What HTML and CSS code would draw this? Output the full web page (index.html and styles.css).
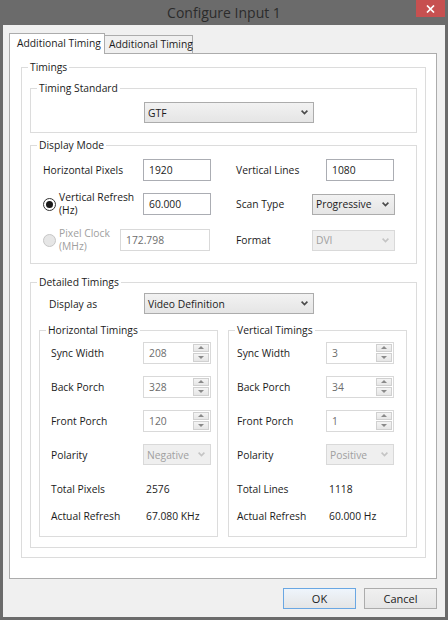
FILE: index.html
```html
<!DOCTYPE html>
<html lang="en">
<head>
    <meta charset="UTF-8">
    <title>Configure Input 1</title>
    <link rel="stylesheet" href="styles.css">
</head>
<body>
    <div class="window">
        <div class="titlebar">
            <span class="title">Configure Input 1</span>
            <button class="close-btn" aria-label="Close">
                <svg width="9" height="8" viewBox="0 0 9 8"><path d="M1 0.5 L8 7.5 M8 0.5 L1 7.5" stroke="#fff" stroke-width="1.7"/></svg>
            </button>
        </div>

        <div class="client">
            <div class="tabs">
                <div class="tab active">Additional Timing</div>
                <div class="tab">Additional Timing</div>
            </div>

            <div class="tab-panel">
                <fieldset class="group timings">
                    <legend>Timings</legend>

                    <fieldset class="group standard">
                        <legend>Timing Standard</legend>
                        <div class="combo std-combo">
                            <span>GTF</span>
                            <svg class="chev" width="7" height="5" viewBox="0 0 7 5"><path d="M0.6 0.6 L3.5 3.6 L6.4 0.6" fill="none" stroke="#4a4a4a" stroke-width="1.6"/></svg>
                        </div>
                    </fieldset>

                    <fieldset class="group display-mode">
                        <legend>Display Mode</legend>
                        <div class="dm-row">
                            <div class="dm-cell left">
                                <span class="lbl w100">Horizontal Pixels</span>
                                <span class="textbox w68">1920</span>
                            </div>
                            <div class="dm-cell">
                                <span class="lbl w90">Vertical Lines</span>
                                <span class="textbox w68">1080</span>
                            </div>
                        </div>
                        <div class="dm-row">
                            <div class="dm-cell left">
                                <label class="radio-lbl w100"><span class="radio checked"></span><span>Vertical Refresh<br>(Hz)</span></label>
                                <span class="textbox w68">60.000</span>
                            </div>
                            <div class="dm-cell">
                                <span class="lbl w76">Scan Type</span>
                                <div class="combo w83">
                                    <span>Progressive</span>
                                    <svg class="chev" width="7" height="5" viewBox="0 0 7 5"><path d="M0.6 0.6 L3.5 3.6 L6.4 0.6" fill="none" stroke="#4a4a4a" stroke-width="1.6"/></svg>
                                </div>
                            </div>
                        </div>
                        <div class="dm-row last">
                            <div class="dm-cell left">
                                <label class="radio-lbl w77 disabled"><span class="radio off"></span><span>Pixel Clock<br>(MHz)</span></label>
                                <span class="textbox w90 disabled">172.798</span>
                            </div>
                            <div class="dm-cell">
                                <span class="lbl w76">Format</span>
                                <div class="combo w83 disabled">
                                    <span>DVI</span>
                                    <svg class="chev" width="7" height="5" viewBox="0 0 7 5"><path d="M0.6 0.6 L3.5 3.6 L6.4 0.6" fill="none" stroke="#c4c4c4" stroke-width="1.6"/></svg>
                                </div>
                            </div>
                        </div>
                    </fieldset>

                    <fieldset class="group detailed">
                        <legend>Detailed Timings</legend>
                        <div class="display-as">
                            <span class="lbl w95">Display as</span>
                            <div class="combo w170">
                                <span>Video Definition</span>
                                <svg class="chev" width="7" height="5" viewBox="0 0 7 5"><path d="M0.6 0.6 L3.5 3.6 L6.4 0.6" fill="none" stroke="#4a4a4a" stroke-width="1.6"/></svg>
                            </div>
                        </div>

                        <div class="sub-groups">
                            <fieldset class="group sub horiz">
                                <legend>Horizontal Timings</legend>
                                <div class="t-row">
                                    <span class="lbl">Sync Width</span>
                                    <span class="spin"><span class="spin-val">208</span><span class="spin-btns"><span class="spin-up"></span><span class="spin-dn"></span></span></span>
                                </div>
                                <div class="t-row">
                                    <span class="lbl">Back Porch</span>
                                    <span class="spin"><span class="spin-val">328</span><span class="spin-btns"><span class="spin-up"></span><span class="spin-dn"></span></span></span>
                                </div>
                                <div class="t-row">
                                    <span class="lbl">Front Porch</span>
                                    <span class="spin"><span class="spin-val">120</span><span class="spin-btns"><span class="spin-up"></span><span class="spin-dn"></span></span></span>
                                </div>
                                <div class="t-row">
                                    <span class="lbl">Polarity</span>
                                    <div class="combo w68 disabled">
                                        <span>Negative</span>
                                        <svg class="chev" width="7" height="5" viewBox="0 0 7 5"><path d="M0.6 0.6 L3.5 3.6 L6.4 0.6" fill="none" stroke="#c4c4c4" stroke-width="1.6"/></svg>
                                    </div>
                                </div>
                                <div class="t-row text first">
                                    <span class="lbl">Total Pixels</span>
                                    <span class="val">2576</span>
                                </div>
                                <div class="t-row text">
                                    <span class="lbl">Actual Refresh</span>
                                    <span class="val">67.080 KHz</span>
                                </div>
                            </fieldset>

                            <fieldset class="group sub vert">
                                <legend>Vertical Timings</legend>
                                <div class="t-row">
                                    <span class="lbl">Sync Width</span>
                                    <span class="spin"><span class="spin-val">3</span><span class="spin-btns"><span class="spin-up"></span><span class="spin-dn"></span></span></span>
                                </div>
                                <div class="t-row">
                                    <span class="lbl">Back Porch</span>
                                    <span class="spin"><span class="spin-val">34</span><span class="spin-btns"><span class="spin-up"></span><span class="spin-dn"></span></span></span>
                                </div>
                                <div class="t-row">
                                    <span class="lbl">Front Porch</span>
                                    <span class="spin"><span class="spin-val">1</span><span class="spin-btns"><span class="spin-up"></span><span class="spin-dn"></span></span></span>
                                </div>
                                <div class="t-row">
                                    <span class="lbl">Polarity</span>
                                    <div class="combo w68 disabled">
                                        <span>Positive</span>
                                        <svg class="chev" width="7" height="5" viewBox="0 0 7 5"><path d="M0.6 0.6 L3.5 3.6 L6.4 0.6" fill="none" stroke="#c4c4c4" stroke-width="1.6"/></svg>
                                    </div>
                                </div>
                                <div class="t-row text first">
                                    <span class="lbl">Total Lines</span>
                                    <span class="val">1118</span>
                                </div>
                                <div class="t-row text">
                                    <span class="lbl">Actual Refresh</span>
                                    <span class="val">60.000 Hz</span>
                                </div>
                            </fieldset>
                        </div>
                    </fieldset>
                </fieldset>
            </div>

            <div class="buttons">
                <button class="btn default">OK</button>
                <button class="btn">Cancel</button>
            </div>
        </div>
    </div>
</body>
</html>
```

FILE: styles.css
```css
body {
    margin: 0;
    font-family: "Open Sans", "Noto Sans", sans-serif;
    font-size: 10.3px;
    color: #1b1b1b;
}
.window {
    width: 448px;
    height: 620px;
    background: #6b6b6b; /* window frame */
    display: flex;
    flex-direction: column;
}

/* Title bar */
.titlebar {
    height: 25px;
    flex: none;
    display: grid;
    grid-template-columns: 1fr auto 1fr;
}
.title {
    grid-column: 2;
    align-self: center;
    font-size: 14px;
    color: #2b2b2b;
}
.close-btn {
    grid-column: 3;
    justify-self: end;
    align-self: start;
    width: 29px;
    height: 17px;
    margin-right: 3px;
    padding: 0;
    border: none;
    background: #c75050;
    display: flex;
    align-items: center;
    justify-content: center;
}

/* Client area */
.client {
    flex: 1;
    margin: 0 3px 3px;
    padding: 8px 8px 0 6px;
    background: #f0f0f0;
    display: flex;
    flex-direction: column;
}
.tabs {
    display: flex;
    align-items: flex-end;
    height: 20px;
}
.tab {
    width: 88px;
    height: 18px;
    box-sizing: border-box;
    padding-left: 4px;
    border: 1px solid #acacac;
    border-left: none;
    border-bottom: none;
    background: #f0f0f0;
    line-height: 17px;
    white-space: nowrap;
}
.tab.active {
    width: 96px;
    height: 21px;
    padding-left: 7px;
    margin-bottom: -1px;
    border-left: 1px solid #acacac;
    background: #fff;
    line-height: 19px;
    position: relative;
    z-index: 1;
}
.tab-panel {
    height: 526px;
    box-sizing: border-box;
    padding: 6px 10px 0 11px;
    border: 1px solid #acacac;
    background: #fff;
}

/* Group boxes - no side padding so the legend stays put */
.group {
    margin: 0;
    padding: 0;
    min-width: 0;
    border: 1px solid #dcdcdc;
}
.group legend {
    margin-left: 6px;
    padding: 0 2px;
    line-height: 14px;
}
.timings {
    padding-bottom: 9px;
}
.timings > .group {
    margin-left: 8px;
    margin-right: 8px;
}
.standard {
    margin-top: 7px;
    padding-bottom: 9px;
}
.std-combo {
    width: 170px;
    margin: 7px 0 0 113px;
}
.display-mode {
    margin-top: 5px;
    padding-bottom: 12px;
}
.dm-row {
    display: flex;
    align-items: center;
    height: 22px;
    margin-top: 12px;
    padding-left: 12px;
}
.dm-row:first-of-type {
    margin-top: 7px;
}
.dm-row.last {
    margin-top: 14px;
}
.dm-cell {
    display: flex;
    align-items: center;
}
.dm-cell.left {
    width: 193px;
}
.timings > .detailed {
    margin-top: 11px;
    padding-bottom: 10px;
}
.display-as {
    display: flex;
    align-items: center;
    height: 21px;
    margin-top: 4px;
    padding-left: 18px;
}
.sub-groups {
    display: flex;
    gap: 10px;
    margin: 9px 9px 0 8px;
}
.sub {
    flex: 1;
    padding-bottom: 12px;
}
.t-row {
    display: flex;
    align-items: center;
    height: 21px;
    margin-top: 13px;
    padding-left: 11px;
}
.vert .t-row {
    padding-left: 8px;
}
.t-row:first-of-type {
    margin-top: 5px;
}
.t-row .lbl {
    width: 92px;
}
.vert .t-row .lbl {
    width: 89px;
}
.t-row.text {
    height: 16px;
    margin-top: 11px;
}
.t-row.text.first {
    margin-top: 16px;
}
.val {
    padding-left: 3px;
}

/* Labels and widths */
.lbl {
    flex: none;
    white-space: nowrap;
}
.w68 { width: 68px; }
.w76 { width: 76px; }
.w77 { width: 77px; }
.w83 { width: 83px; }
.w90 { width: 90px; }
.w95 { width: 95px; }
.w100 { width: 100px; }
.w170 { width: 170px; }

/* Controls */
.textbox {
    flex: none;
    height: 22px;
    box-sizing: border-box;
    padding-left: 5px;
    border: 1px solid #abadb3;
    background: #fff;
    display: flex;
    align-items: center;
}
.textbox.disabled {
    border-color: #d9d9d9;
    color: #6d6d6d;
}
.radio-lbl {
    flex: none;
    display: flex;
    align-items: center;
    line-height: 13px;
}
.radio-lbl.disabled {
    color: #a0a0a0;
}
.radio {
    flex: none;
    width: 13px;
    height: 13px;
    box-sizing: border-box;
    margin-right: 3px;
    border: 1px solid #333;
    border-radius: 50%;
    background: #fff;
    display: flex;
    align-items: center;
    justify-content: center;
}
.radio.checked::after {
    content: "";
    width: 7px;
    height: 7px;
    border-radius: 50%;
    background: #1a1a1a;
}
.radio.off {
    border-color: #c6c6c6;
    background: #e6e6e6;
}
.combo {
    flex: none;
    height: 21px;
    box-sizing: border-box;
    padding: 0 5px 0 3px;
    border: 1px solid #acacac;
    background: linear-gradient(#f2f2f2, #e5e5e5);
    display: flex;
    align-items: center;
    justify-content: space-between;
    white-space: nowrap;
}
.combo.disabled {
    border-color: #d9d9d9;
    background: #efefef;
    color: #a0a0a0;
}
.spin {
    flex: none;
    width: 68px;
    height: 22px;
    box-sizing: border-box;
    padding: 1px;
    border: 1px solid #d9d9d9;
    background: #fff;
    display: flex;
    color: #6d6d6d;
}
.spin-val {
    flex: 1;
    padding-left: 4px;
    display: flex;
    align-items: center;
}
.spin-btns {
    width: 16px;
    display: flex;
    flex-direction: column;
    gap: 1px;
}
.spin-up,
.spin-dn {
    flex: 1;
    box-sizing: border-box;
    border: 1px solid #d0d0d0;
    background: linear-gradient(#f4f4f4, #e6e6e6);
    display: flex;
    align-items: center;
    justify-content: center;
}
.spin-up::after {
    content: "";
    border: 3px solid transparent;
    border-top: none;
    border-bottom: 3px solid #8a8a8a;
}
.spin-dn::after {
    content: "";
    border: 3px solid transparent;
    border-bottom: none;
    border-top: 3px solid #8a8a8a;
}

/* Dialog buttons */
.buttons {
    display: flex;
    justify-content: flex-end;
    gap: 8px;
    margin-top: 9px;
}
.btn {
    width: 73px;
    height: 21px;
    padding: 0;
    border: 1px solid #acacac;
    background: linear-gradient(#f0f0f0, #e5e5e5);
    font: inherit;
    font-size: 11px;
    color: #1b1b1b;
}
.btn.default {
    border-color: #6aa7e3;
    background: linear-gradient(#eef5fc, #e5e5e5);
}
```
